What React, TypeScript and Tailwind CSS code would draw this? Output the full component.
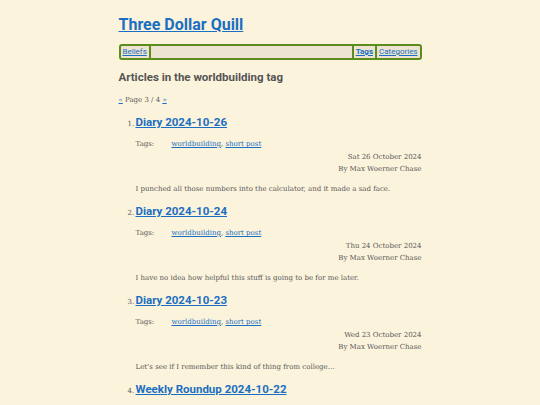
import React from "react";

const posts = [
  { title: "Diary 2024-10-26", date: "Sat 26 October 2024", summary: "I punched all those numbers into the calculator, and it made a sad face." },
  { title: "Diary 2024-10-24", date: "Thu 24 October 2024", summary: "I have no idea how helpful this stuff is going to be for me later." },
  { title: "Diary 2024-10-23", date: "Wed 23 October 2024", summary: "Let\u2019s see if I remember this kind of thing from college\u2026" },
  { title: "Weekly Roundup 2024-10-22", date: "Tue 22 October 2024", summary: "" },
];

const head = { fontFamily: 'Roboto, "Noto Sans", sans-serif' };
const body = { fontFamily: '"DejaVu Serif", "Liberation Serif", serif' };

export default function App() {
  return (
    <div className="min-h-[405px] w-full bg-[#fcf3dc] text-[#585858]" style={body}>
      <div className="mx-auto w-[303px] pt-[13px]">
        <h1 className="text-[16px] font-bold leading-[24px]" style={head}>
          <a href="#" className="text-[#1a6fc2] underline">Three Dollar Quill</a>
        </h1>
        <nav className="mt-[7px] flex h-[16px] items-stretch rounded-[3px] border-[2px] border-[#5c8d1c] bg-[#ece4d0] text-[8px]" style={head}>
          <a href="#" className="flex items-center border-r-[2px] border-[#5c8d1c] px-[2px] text-[#1a6fc2] underline">Beliefs</a>
          <div className="flex-1" />
          <a href="#" className="flex items-center border-l-[2px] border-[#5c8d1c] px-[2px] font-bold text-[#1a6fc2] underline">Tags</a>
          <a href="#" className="flex items-center border-l-[2px] border-[#5c8d1c] px-[2px] text-[#1a6fc2] underline">Categories</a>
        </nav>
        <h2 className="mt-[9px] text-[11.5px] font-bold leading-[16px] text-[#555]" style={head}>Articles in the worldbuilding tag</h2>
        <p className="mt-[10px] text-[7px] leading-[10px]">
          <a href="#" className="text-[#1a6fc2] underline">«</a> Page 3 / 4 <a href="#" className="text-[#1a6fc2] underline">»</a>
        </p>
        <ol className="mt-[9px] pl-[17px]">
          {posts.map((p, i) => (
            <li key={i} className="mb-[9px]">
              <div className="flex items-baseline">
                <span className="ml-[-8px] w-[8px] text-[7px]">{i + 1}.</span>
                <a href="#" className="text-[11.5px] font-bold leading-[16px] text-[#1a6fc2] underline" style={head}>{p.title}</a>
              </div>
              <div className="mt-[9px] flex text-[7px] leading-[10px]">
                <span className="w-[36px]">Tags:</span>
                <span>
                  <a href="#" className="text-[#1a6fc2] underline">worldbuilding</a>,{" "}
                  <a href="#" className="text-[#1a6fc2] underline">short post</a>
                </span>
              </div>
              <div className="mt-[2px] text-right text-[7px] leading-[12px]">{p.date}</div>
              <div className="text-right text-[7px] leading-[12px]">By Max Woerner Chase</div>
              {p.summary && <p className="mt-[9px] text-[7px] leading-[10px]">{p.summary}</p>}
            </li>
          ))}
        </ol>
      </div>
    </div>
  );
}
